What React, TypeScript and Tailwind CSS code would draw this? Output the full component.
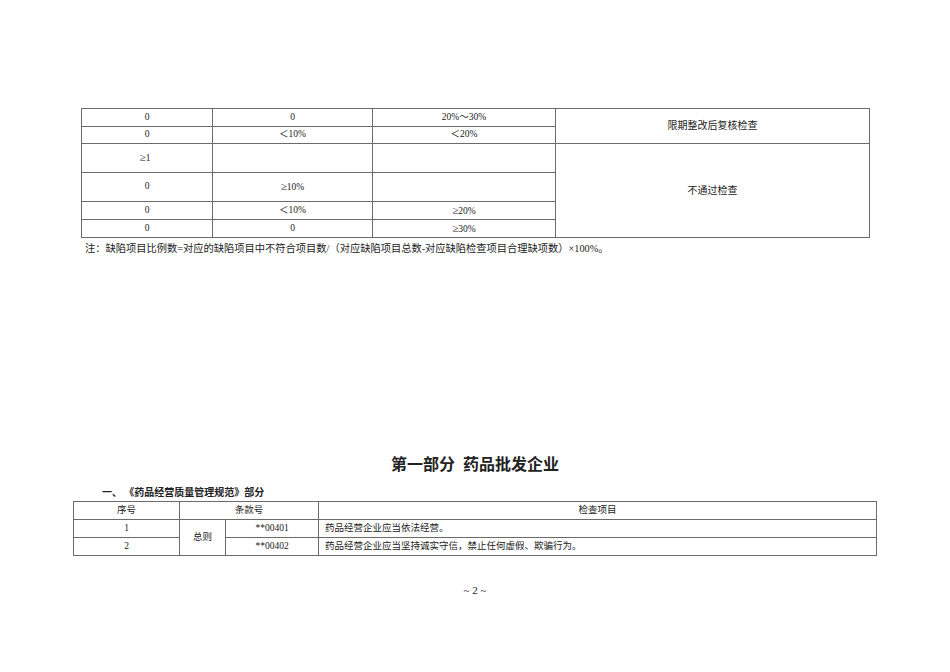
const serif = "font-['Liberation_Serif','Noto_Sans_CJK_SC',serif]";

const cell = "border border-[#6b6b6b] p-0 text-center align-middle font-normal";

function Ge({ v }: { v: string }) {
  return (
    <span>
      <span className="text-[11px]">≥</span>
      {v}
    </span>
  );
}

export default function App() {
  return (
    <div className={`w-[950px] h-[672px] bg-white text-[#222] ${serif} text-[9.5px] leading-none`}>
      <div className="pt-[108px] pl-[81px]">
        <table className="w-[788px] table-fixed border-collapse">
          <colgroup>
            <col className="w-[131px]" />
            <col className="w-[160px]" />
            <col className="w-[183px]" />
            <col className="w-[314px]" />
          </colgroup>
          <tbody>
            <tr className="h-[18px]">
              <td className={cell}>0</td>
              <td className={cell}>0</td>
              <td className={cell}>20%～30%</td>
              <td className={`${cell} text-[10px]`} rowSpan={2}>限期整改后复核检查</td>
            </tr>
            <tr className="h-[17px]">
              <td className={cell}>0</td>
              <td className={cell}>＜10%</td>
              <td className={cell}>＜20%</td>
            </tr>
            <tr className="h-[29px]">
              <td className={`${cell} pr-[4px]`}><Ge v="1" /></td>
              <td className={cell}></td>
              <td className={cell}></td>
              <td className={`${cell} text-[10px]`} rowSpan={4}>不通过检查</td>
            </tr>
            <tr className="h-[29px]">
              <td className={cell}>0</td>
              <td className={cell}><Ge v="10%" /></td>
              <td className={cell}></td>
            </tr>
            <tr className="h-[18px]">
              <td className={cell}>0</td>
              <td className={cell}>＜10%</td>
              <td className={cell}><Ge v="20%" /></td>
            </tr>
            <tr className="h-[18px]">
              <td className={cell}>0</td>
              <td className={cell}>0</td>
              <td className={cell}><Ge v="30%" /></td>
            </tr>
          </tbody>
        </table>
        <p className="mt-[6px] pl-[4px] text-[10.25px]">
          注：缺陷项目比例数=对应的缺陷项目中不符合项目数/（对应缺陷项目总数-对应缺陷检查项目合理缺项数）×100%。
        </p>
      </div>

      <h1 className="mt-[203px] text-center text-[16px] font-bold">
        第一部分&nbsp;&nbsp;药品批发企业
      </h1>

      <div className="pl-[73px]">
        <p className="mt-[14px] pl-[29px] font-['Noto_Sans_CJK_SC',sans-serif] text-[10px] font-bold">
          一、&nbsp;《药品经营质量管理规范》部分
        </p>
        <table className="mt-[4px] w-[803px] table-fixed border-collapse">
          <colgroup>
            <col className="w-[106px]" />
            <col className="w-[46px]" />
            <col className="w-[93px]" />
            <col className="w-[558px]" />
          </colgroup>
          <tbody>
            <tr className="h-[18px]">
              <td className={cell}>序号</td>
              <td className={cell} colSpan={2}>条款号</td>
              <td className={cell}>检查项目</td>
            </tr>
            <tr className="h-[18px]">
              <td className={cell}>1</td>
              <td className={cell} rowSpan={2}>总则</td>
              <td className={cell}>**00401</td>
              <td className={`${cell} text-left pl-[6px]`}>药品经营企业应当依法经营。</td>
            </tr>
            <tr className="h-[18px]">
              <td className={cell}>2</td>
              <td className={cell}>**00402</td>
              <td className={`${cell} text-left pl-[6px]`}>药品经营企业应当坚持诚实守信，禁止任何虚假、欺骗行为。</td>
            </tr>
          </tbody>
        </table>
      </div>

      <p className="mt-[29px] text-center text-[11px]">~ 2 ~</p>
    </div>
  );
}
